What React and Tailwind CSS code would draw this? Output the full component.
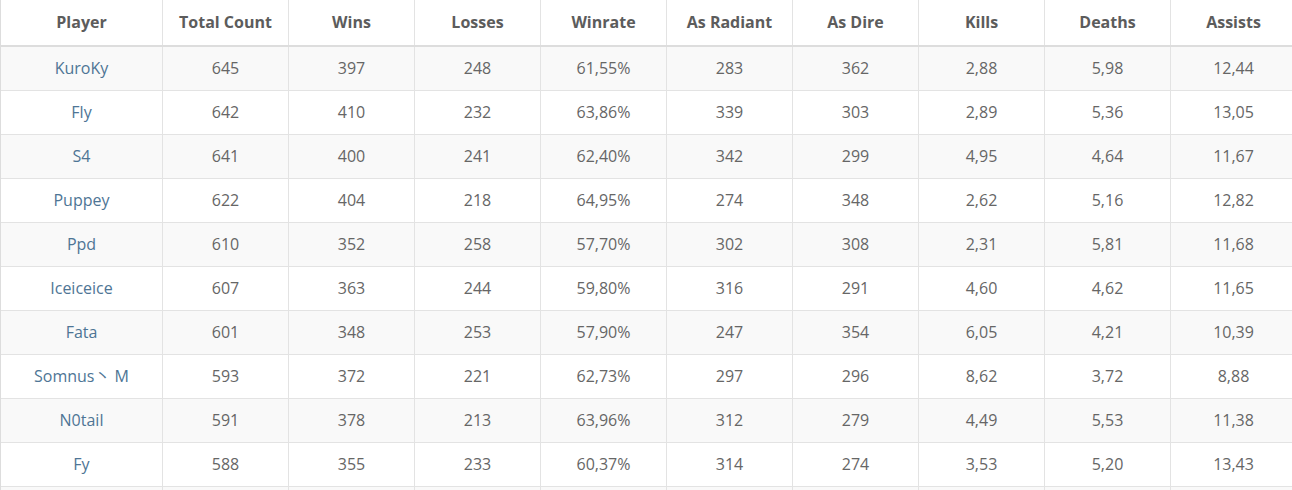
const headers = [
  "Player",
  "Total Count",
  "Wins",
  "Losses",
  "Winrate",
  "As Radiant",
  "As Dire",
  "Kills",
  "Deaths",
  "Assists",
];

const rows = [
  ["KuroKy", "645", "397", "248", "61,55%", "283", "362", "2,88", "5,98", "12,44"],
  ["Fly", "642", "410", "232", "63,86%", "339", "303", "2,89", "5,36", "13,05"],
  ["S4", "641", "400", "241", "62,40%", "342", "299", "4,95", "4,64", "11,67"],
  ["Puppey", "622", "404", "218", "64,95%", "274", "348", "2,62", "5,16", "12,82"],
  ["Ppd", "610", "352", "258", "57,70%", "302", "308", "2,31", "5,81", "11,68"],
  ["Iceiceice", "607", "363", "244", "59,80%", "316", "291", "4,60", "4,62", "11,65"],
  ["Fata", "601", "348", "253", "57,90%", "247", "354", "6,05", "4,21", "10,39"],
  ["Somnus丶 M", "593", "372", "221", "62,73%", "297", "296", "8,62", "3,72", "8,88"],
  ["N0tail", "591", "378", "213", "63,96%", "312", "279", "4,49", "5,53", "11,38"],
  ["Fy", "588", "355", "233", "60,37%", "314", "274", "3,53", "5,20", "13,43"],
];

const grid = "grid grid-cols-[161px_repeat(9,126px)] w-[1296px]";

export default function App() {
  return (
    <div
      className="h-[490px] w-[1292px] overflow-hidden bg-white"
      style={{ fontFamily: '"Open Sans", "Noto Sans CJK SC", sans-serif' }}
    >
      <div className="border-l border-[#dddddd]">
        {/* header */}
        <div className={`${grid} h-[47px] border-b-2 border-[#dddddd]`}>
          {headers.map((h, i) => (
            <div
              key={h}
              className={`flex items-center justify-center pb-[2px] text-[16px] font-bold text-[#5c5c5c] ${
                i > 0 ? "border-l border-[#e3e3e3]" : ""
              }`}
            >
              {h}
            </div>
          ))}
        </div>

        {rows.map((r, ri) => (
          <div
            key={ri}
            className={`${grid} h-[44px] border-b border-[#e3e3e3] ${
              ri % 2 === 0 ? "bg-[#f9f9f9]" : "bg-white"
            }`}
          >
            {r.map((c, ci) => (
              <div
                key={ci}
                className={`flex items-center justify-center pb-[2px] text-[16px] ${
                  ci === 0 ? "text-[#4e7595]" : "text-[#666666] border-l border-[#e3e3e3]"
                }`}
              >
                {c}
              </div>
            ))}
          </div>
        ))}

        {/* next row, mostly out of view */}
        <div className={`${grid} h-[44px] bg-[#f9f9f9]`}>
          {headers.map((h, i) => (
            <div key={h} className={i > 0 ? "border-l border-[#e3e3e3]" : ""} />
          ))}
        </div>
      </div>
    </div>
  );
}
